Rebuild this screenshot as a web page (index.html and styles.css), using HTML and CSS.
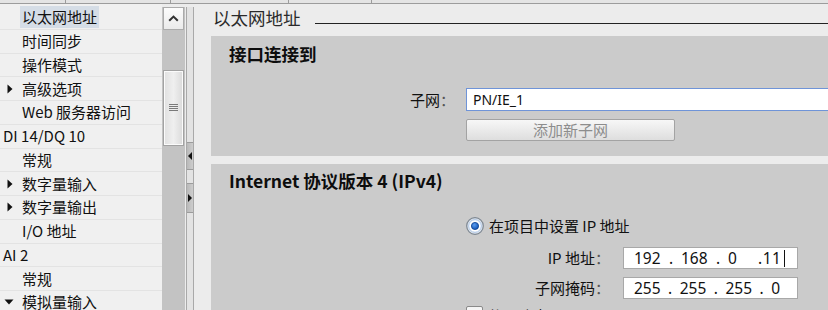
FILE: index.html
```html
<!DOCTYPE html>
<html lang="zh-CN">
<head>
<meta charset="utf-8">
<title>以太网地址</title>
<link rel="stylesheet" href="styles.css">
</head>
<body>
<div class="topstrip">
  <span class="tc tc1"></span><span class="tc tc2"></span><span class="tc tc3"></span><span class="tc tc4"></span>
</div>
<div class="main">
  <ul class="tree">
    <li class="row l2"><span class="lbl sel">以太网地址</span></li>
    <li class="row l2"><span class="lbl">时间同步</span></li>
    <li class="row l2"><span class="lbl">操作模式</span></li>
    <li class="row l2"><span class="tw"><svg width="6" height="10" viewBox="0 0 6 10"><path d="M0.5 0.5 L5.5 5 L0.5 9.5 Z" fill="#111"/></svg></span><span class="lbl">高级选项</span></li>
    <li class="row l2"><span class="lbl">Web 服务器访问</span></li>
    <li class="row l1"><span class="lbl">DI 14/DQ 10</span></li>
    <li class="row l2"><span class="lbl">常规</span></li>
    <li class="row l2"><span class="tw"><svg width="6" height="10" viewBox="0 0 6 10"><path d="M0.5 0.5 L5.5 5 L0.5 9.5 Z" fill="#111"/></svg></span><span class="lbl">数字量输入</span></li>
    <li class="row l2"><span class="tw"><svg width="6" height="10" viewBox="0 0 6 10"><path d="M0.5 0.5 L5.5 5 L0.5 9.5 Z" fill="#111"/></svg></span><span class="lbl">数字量输出</span></li>
    <li class="row l2"><span class="lbl">I/O 地址</span></li>
    <li class="row l1"><span class="lbl">AI 2</span></li>
    <li class="row l2"><span class="lbl">常规</span></li>
    <li class="row l2"><span class="tw tw-down"><svg width="10" height="6" viewBox="0 0 10 6"><path d="M0.5 0.5 L9.5 0.5 L5 5.5 Z" fill="#111"/></svg></span><span class="lbl">模拟量输入</span></li>
  </ul>

  <div class="vscroll">
    <div class="sbtn">
      <svg width="11" height="7" viewBox="0 0 11 7"><path d="M1.2 5.8 L5.5 1.6 L9.8 5.8" fill="none" stroke="#333" stroke-width="2"/></svg>
    </div>
    <div class="thumb">
      <svg width="9" height="8" viewBox="0 0 9 8"><path d="M0 0.5 H9 M0 2.5 H9 M0 4.5 H9 M0 6.5 H9" stroke="#7a7a7a" stroke-width="1"/></svg>
    </div>
  </div>

  <div class="splitter">
    <div class="sp-btn sp-a"><svg width="4" height="8" viewBox="0 0 4 8"><path d="M4 0 L0 4 L4 8 Z" fill="#111"/></svg></div>
    <div class="sp-btn sp-b"><svg width="4" height="8" viewBox="0 0 4 8"><path d="M0 0 L4 4 L0 8 Z" fill="#111"/></svg></div>
  </div>

  <div class="content">
    <div class="titlerow">
      <span class="title">以太网地址</span>
      <span class="titleline"></span>
    </div>

    <section class="panel panel1">
      <h2 class="heading">接口连接到</h2>
      <div class="frow subnet-row">
        <span class="flabel flabel1">子网<span class="colon">：</span></span>
        <div class="input input-subnet">PN/IE_1</div>
      </div>
      <div class="btn">添加新子网</div>
    </section>

    <section class="panel panel2">
      <h2 class="heading">Internet 协议版本 4 (IPv4)</h2>
      <div class="radio-row">
        <svg class="radio" width="18" height="18" viewBox="0 0 18 18">
          <defs>
            <radialGradient id="rg" cx="0.4" cy="0.35" r="0.7">
              <stop offset="0" stop-color="#5a9cf0"/>
              <stop offset="1" stop-color="#0b4fb0"/>
            </radialGradient>
          </defs>
          <circle cx="9" cy="9" r="8.3" fill="#dfe6ee" stroke="#7d8792" stroke-width="1.2"/>
          <circle cx="9" cy="9" r="6.3" fill="#ffffff" stroke="#a9c3e6" stroke-width="1"/>
          <circle cx="9" cy="9" r="3.6" fill="url(#rg)" stroke="#0a3f8f" stroke-width="0.8"/>
        </svg>
        <span class="rlabel">在项目中设置 IP 地址</span>
      </div>
      <div class="frow ip-row">
        <span class="flabel flabel2">IP 地址<span class="colon">：</span></span>
        <div class="input input-ip">
          <span class="oct">192</span><span class="dot">.</span><span class="oct">168</span><span class="dot">.</span><span class="oct">0</span><span class="last">.11</span><span class="caret"></span>
        </div>
      </div>
      <div class="frow mask-row">
        <span class="flabel flabel2">子网掩码<span class="colon">：</span></span>
        <div class="input input-ip">
          <span class="oct">255</span><span class="dot">.</span><span class="oct">255</span><span class="dot">.</span><span class="oct">255</span><span class="dot">.</span><span class="oct">0</span>
        </div>
      </div>
      <div class="check-row">
        <span class="checkbox"></span>
        <span class="rlabel">使用路由器</span>
      </div>
    </section>
  </div>
</div>
</body>
</html>
```
FILE: styles.css
```css
* { box-sizing: border-box; margin: 0; padding: 0; }
html, body { width: 828px; height: 310px; overflow: hidden; }
body {
  background: #ececec;
  font-family: "Noto Sans CJK SC", "Noto Sans", sans-serif;
  font-size: 15px;
  color: #111;
}

/* top strip (edge of the table above) */
.topstrip {
  height: 4px;
  display: flex;
  background: #e4e4e4;
  border-bottom: 1px solid #9c9c9c;
}
.tc { height: 3px; border-right: 1px solid #9c9c9c; }
.tc1 { width: 66px; }
.tc2 { width: 105px; }
.tc3 { width: 118px; }
.tc4 { width: 83px; }

.main { display: flex; height: 306px; }

/* tree */
.tree {
  list-style: none;
  width: 162px;
  flex: none;
  background: #f0f0f0;
  padding-top: 2px;
}
.row {
  height: 23.75px;
  border-bottom: 1px solid #e3e3e3;
  display: flex;
  align-items: center;
  white-space: nowrap;
}
.l1 { padding-left: 1px; }
.l2 { padding-left: 20px; }
.lbl { height: 22px; line-height: 22px; padding: 0 2px; }
.sel { background: #d5dde6; }
.tw { width: 14px; margin-left: -14px; display: flex; align-items: center; padding-left: 1px; }
.tw-down { margin-left: -16px; width: 16px; padding-left: 0; }

/* tree scrollbar */
.vscroll {
  width: 23px;
  flex: none;
  margin-top: 3px;
  background: #c3c3c3;
  display: flex;
  flex-direction: column;
  align-items: center;
}
.sbtn {
  width: 21px;
  height: 23px;
  border: 1px solid #ababab;
  background: linear-gradient(#fcfcfc, #ebebeb);
  display: flex;
  align-items: center;
  justify-content: center;
}
.thumb {
  width: 21px;
  height: 76px;
  margin-top: 40px;
  border: 1px solid #a2a2a2;
  box-shadow: inset 0 0 0 1px #fbfbfb;
  background: linear-gradient(90deg, #e0e0e0, #efefef 50%, #dadada);
  display: flex;
  align-items: center;
  justify-content: center;
}

/* splitter */
.splitter {
  width: 8px;
  flex: none;
  margin: 3px 0 0 1px;
  border-left: 1px solid #a9a9a9;
  border-right: 1px solid #a9a9a9;
  background: #e3e3e3;
  display: flex;
  flex-direction: column;
}
.sp-btn {
  height: 28px;
  background: linear-gradient(90deg, #b9b9b9, #cdcdcd);
  border-top: 1px solid #9c9c9c;
  border-bottom: 1px solid #9c9c9c;
  display: flex;
  align-items: center;
  justify-content: center;
}
.sp-a { margin-top: 135px; }
.sp-b { margin-top: 13px; height: 30px; }

/* content */
.content {
  flex: 1;
  margin-left: 17px;
  display: flex;
  flex-direction: column;
  min-width: 0;
}
.titlerow {
  height: 32px;
  display: flex;
  align-items: flex-start;
}
.title {
  margin-top: 4px;
  padding-left: 2px;
  font-size: 17.5px;
  line-height: 20px;
  color: #2a2a2a;
  white-space: nowrap;
}
.titleline {
  flex: 1;
  height: 1px;
  margin-top: 19px;
  margin-left: 14px;
  background: #222;
}

.panel { background: #cbcbcb; overflow: hidden; }
.panel1 { height: 120px; }
.panel2 { flex: 1; margin-top: 8px; }
.heading {
  font-size: 17.5px;
  font-weight: bold;
  line-height: 22px;
  padding-left: 18px;
  color: #0d0d0d;
  white-space: nowrap;
}
.panel1 .heading { padding-top: 7px; }
.panel2 .heading { padding-top: 6px; }

.frow { display: flex; align-items: center; }
.flabel { text-align: right; line-height: 22px; white-space: nowrap; flex: none; }
.flabel1 { width: 244px; margin-right: 11px; }
.flabel2 { width: 399px; margin-right: 13px; }
.colon { font-family: "Noto Sans CJK TC", "Noto Sans CJK SC", sans-serif; color: #555; }

.subnet-row { margin-top: 23px; height: 23px; }
.input {
  background: #fff;
  display: flex;
  align-items: center;
  white-space: nowrap;
  font-family: "Noto Sans", sans-serif;
  color: #111;
}
.input-subnet {
  width: 420px;
  height: 23px;
  flex: none;
  border: 1px solid #6f94d8;
  padding-left: 6px;
  font-size: 14px;
}
.btn {
  margin: 8px 0 0 255px;
  width: 209px;
  height: 22px;
  border: 1px solid #a3a3a3;
  border-radius: 2px;
  background: linear-gradient(#f7f7f7, #dedede);
  color: #8d8d8d;
  text-align: center;
  line-height: 20px;
}

.radio-row { margin-top: 24px; height: 20px; display: flex; align-items: center; padding-left: 255px; }
.radio { flex: none; }
.rlabel { margin-left: 5px; line-height: 20px; white-space: nowrap; }

.ip-row { margin-top: 11px; height: 22px; }
.mask-row { margin-top: 8px; height: 22px; }
.input-ip {
  width: 175px;
  height: 22px;
  flex: none;
  border: 1px solid #a8a8a8;
  padding-left: 10px;
  font-size: 15.5px;
}
.oct { width: 27px; }
.dot { width: 20px; text-align: center; }
.last { margin-left: 3px; letter-spacing: 0.5px; }
.caret { width: 1px; height: 17px; background: #111; margin-left: 3px; }

.check-row { margin-top: 7px; display: flex; align-items: flex-start; padding-left: 255px; }
.checkbox {
  width: 17px;
  height: 17px;
  border: 1px solid #8a8a8a;
  border-radius: 2px;
  background: linear-gradient(#f4f4f4, #ffffff);
  flex: none;
}
```
